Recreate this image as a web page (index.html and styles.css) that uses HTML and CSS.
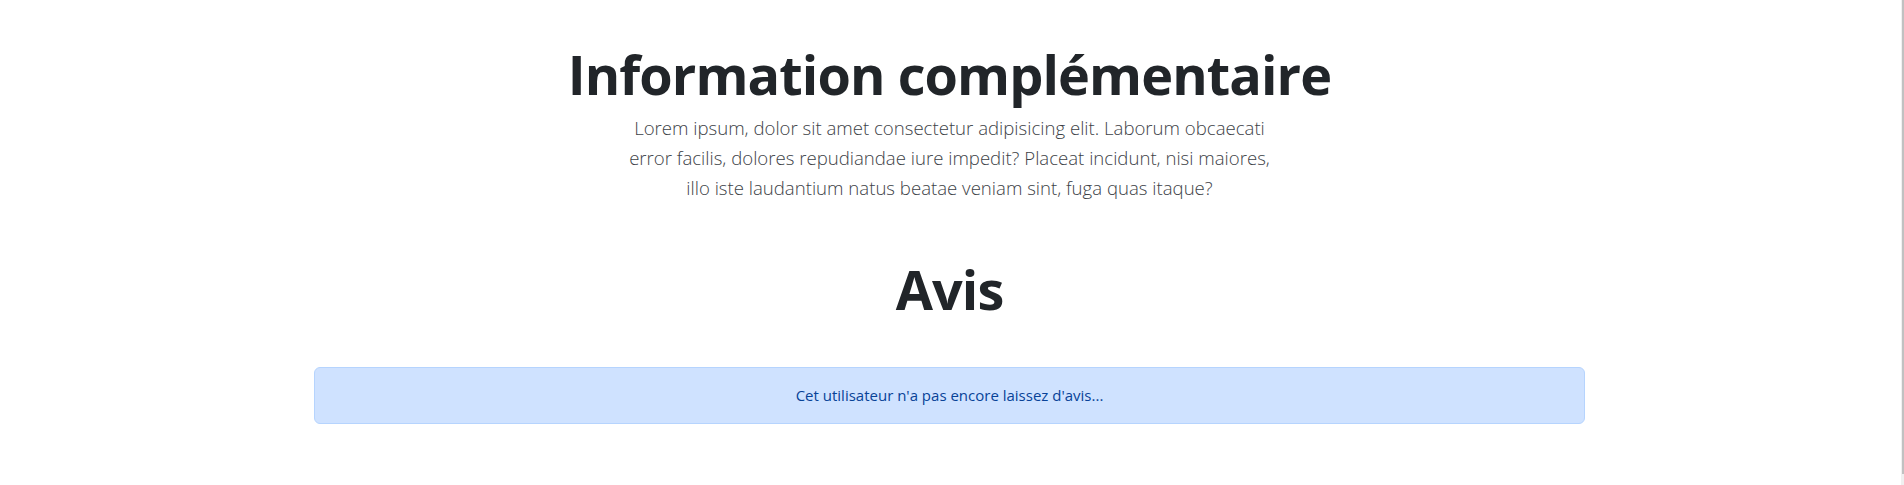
FILE: index.html
```html
<!DOCTYPE html>
<html lang="fr">
<head>
<meta charset="utf-8">
<title>Profil</title>
<link rel="stylesheet" href="styles.css">
</head>
<body>
<main class="page">
  <section class="info">
    <h1 class="title">Information complémentaire</h1>
    <p class="lead">Lorem ipsum, dolor sit amet consectetur adipisicing elit. Laborum obcaecati error facilis, dolores repudiandae iure impedit? Placeat incidunt, nisi maiores, illo iste laudantium natus beatae veniam sint, fuga quas itaque?</p>
  </section>
  <section class="reviews">
    <h2 class="title">Avis</h2>
    <div class="alert">Cet utilisateur n'a pas encore laissez d'avis...</div>
  </section>
</main>
<div class="scrollbar"><div class="scrollbar-thumb"></div></div>
</body>
</html>
```
FILE: styles.css
```css
html, body {
  margin: 0;
  padding: 0;
  background: #fff;
}
body {
  font-family: "Open Sans", "Noto Sans", sans-serif;
  color: #212529;
  height: 485px;
  overflow: hidden;
}
.page {
  width: 1899px;
  display: flex;
  flex-direction: column;
  align-items: center;
}
.info {
  display: flex;
  flex-direction: column;
  align-items: center;
  padding-top: 42px;
}
.title {
  margin: 0;
  font-size: 54px;
  font-weight: 700;
  line-height: 1.2;
  letter-spacing: -0.9px;
  text-align: center;
}
.lead {
  margin: 6px 0 0;
  width: 652px;
  font-size: 18.6px;
  font-weight: 300;
  line-height: 30px;
  text-align: center;
  color: #3d4247;
}
.reviews {
  display: flex;
  flex-direction: column;
  align-items: center;
  width: 1271px;
  padding-top: 54px;
}
.alert {
  box-sizing: border-box;
  width: 100%;
  margin-top: 45px;
  height: 57px;
  display: flex;
  align-items: center;
  justify-content: center;
  background: #cfe2ff;
  border: 1px solid #b6d4fe;
  border-radius: 6px;
  color: #084298;
  font-size: 15px;
}
.scrollbar {
  position: fixed;
  top: 0;
  right: 0;
  width: 3px;
  height: 100%;
  background: #f0f0f0;
}
.scrollbar-thumb {
  margin-left: 1px;
  width: 2px;
  height: 474px;
  background: #c1c1c1;
}
```
